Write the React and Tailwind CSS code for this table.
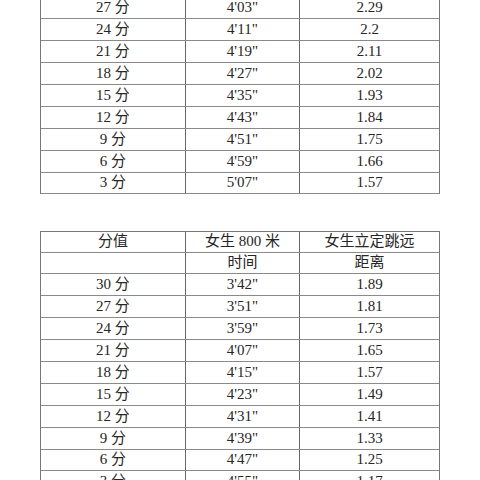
const top = [
  ["27 分", "4'03\"", "2.29"],
  ["24 分", "4'11\"", "2.2"],
  ["21 分", "4'19\"", "2.11"],
  ["18 分", "4'27\"", "2.02"],
  ["15 分", "4'35\"", "1.93"],
  ["12 分", "4'43\"", "1.84"],
  ["9 分", "4'51\"", "1.75"],
  ["6 分", "4'59\"", "1.66"],
  ["3 分", "5'07\"", "1.57"],
];

const bottom = [
  ["30 分", "3'42\"", "1.89"],
  ["27 分", "3'51\"", "1.81"],
  ["24 分", "3'59\"", "1.73"],
  ["21 分", "4'07\"", "1.65"],
  ["18 分", "4'15\"", "1.57"],
  ["15 分", "4'23\"", "1.49"],
  ["12 分", "4'31\"", "1.41"],
  ["9 分", "4'39\"", "1.33"],
  ["6 分", "4'47\"", "1.25"],
  ["3 分", "4'55\"", "1.17"],
];

function Row({ cells, h = "h-[21.9px]" }) {
  return (
    <div className={`grid grid-cols-[145px_114px_1fr] ${h} border-b border-[#8a8a8a]`}>
      <div className="flex items-center justify-center border-r-[1.5px] border-[#666]">{cells[0]}</div>
      <div className="flex items-center justify-center border-r-[1.5px] border-[#666]">{cells[1]}</div>
      <div className="flex items-center justify-center">{cells[2]}</div>
    </div>
  );
}

export default function App() {
  return (
    <div
      className="w-[480px] h-[480px] bg-white overflow-hidden text-[15px] leading-none text-[#262626]"
      style={{ fontFamily: '"Liberation Serif", "Noto Sans CJK SC", serif' }}
    >
      <div className="ml-[40px] w-[400px] mt-[-2.6px] border-l-[1.5px] border-r-[1.5px] border-[#777]">
        {top.map((r, i) => (
          <Row key={i} cells={r} />
        ))}
      </div>
      <div className="ml-[40px] w-[400px] mt-[37px] border-t-[1.5px] border-l-[1.5px] border-r-[1.5px] border-[#777]">
        <Row cells={["分值", "女生 800 米", "女生立定跳远"]} h="h-[20.1px]" />
        <Row cells={["", "时间", "距离"]} />
        {bottom.map((r, i) => (
          <Row key={i} cells={r} />
        ))}
      </div>
    </div>
  );
}
